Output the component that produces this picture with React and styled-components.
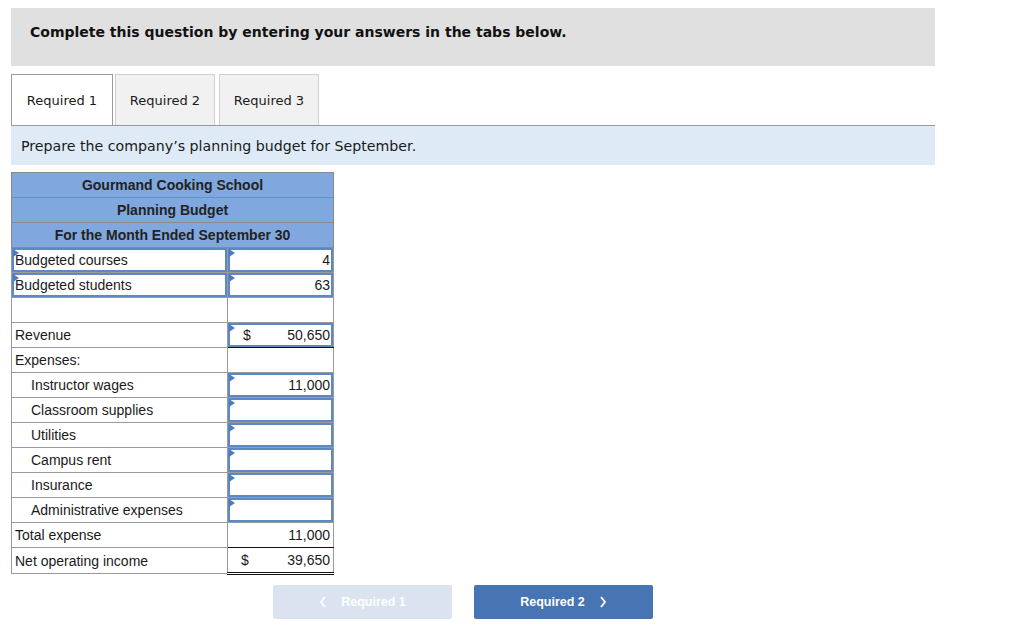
import React from "react";
import styled, { createGlobalStyle } from "styled-components";

const GlobalStyle = createGlobalStyle`
  body {
    margin: 0;
    background: #ffffff;
    font-family: "DejaVu Sans", Verdana, sans-serif;
    color: #1a1a1a;
  }
`;

const Page = styled.div`
  width: 924px;
  padding: 8px 0 0 11px;
`;

const Banner = styled.div`
  height: 58px;
  box-sizing: border-box;
  padding: 16px 0 0 19px;
  background: #e0e0e0;
  font-weight: bold;
  font-size: 14px;
  color: #111;
`;

const TabRow = styled.div`
  display: flex;
  margin-top: 8px;
  align-items: flex-end;
`;

const Tab = styled.div`
  width: ${(p) => p.$w}px;
  height: 51px;
  box-sizing: border-box;
  margin-right: ${(p) => p.$mr}px;
  display: flex;
  align-items: center;
  justify-content: center;
  font-size: 13px;
  color: #1a1a1a;
  background: ${(p) => (p.$active ? "#ffffff" : "#f1f1f1")};
  border: 1px solid ${(p) => (p.$active ? "#9a9a9a" : "#cfcfcf")};
  border-bottom: none;
`;

const Instruction = styled.div`
  height: 40px;
  box-sizing: border-box;
  border-top: 1px solid #9a9a9a;
  background: #deebf7;
  padding: 0 0 0 10px;
  display: flex;
  align-items: center;
  font-size: 14.2px;
  color: #1a1a1a;
`;

const Sheet = styled.table`
  margin-top: 7px;
  width: 322px;
  border-collapse: collapse;
  table-layout: fixed;
  font-family: "Liberation Sans", Arial, sans-serif;
  font-size: 14px;
  line-height: 16px;
  color: #1a1a1a;
`;

const HeadCell = styled.td`
  height: 24px;
  padding: 0;
  background: #80a8de;
  border: 1px solid #8a8a8a;
  text-align: center;
  font-weight: bold;
  color: #222;
`;

const Cell = styled.td`
  height: 24px;
  padding: 0 3px 0 ${(p) => (p.$indent ? "19px" : "3px")};
  border: 1px solid #9a9a9a;
  white-space: nowrap;
  text-align: ${(p) => (p.$right ? "right" : "left")};
  border-bottom: ${(p) =>
    p.$double ? "3px double #111" : p.$under ? "1px solid #111" : "1px solid #9a9a9a"};
`;

const InputCell = styled.td`
  height: 24px;
  padding: 0;
  border: 1px solid #9a9a9a;
  border-bottom: ${(p) => (p.$under ? "1px solid #111" : "1px solid #9a9a9a")};
`;

const InputBox = styled.div`
  position: relative;
  height: 24px;
  box-sizing: border-box;
  border: 2px solid #5d88c6;
  display: flex;
  align-items: center;
  white-space: nowrap;
  padding: 0 1px 0 ${(p) => (p.$left ? "1px" : "13px")};
  &::before {
    content: "";
    position: absolute;
    left: -1px;
    top: -1px;
    border-top: 4px solid transparent;
    border-bottom: 4px solid transparent;
    border-left: 6px solid #4a7cc4;
  }
`;

const Num = styled.span`
  margin-left: auto;
`;

const Money = styled.div`
  display: flex;
  justify-content: space-between;
  padding-left: 10px;
`;

const Footer = styled.div`
  display: flex;
  gap: 22px;
  margin: 10px 0 0 262px;
`;

const NavButton = styled.div`
  width: 179px;
  height: 34px;
  display: flex;
  align-items: center;
  justify-content: center;
  gap: 14px;
  border-radius: 2px;
  font-family: "Liberation Sans", Arial, sans-serif;
  font-weight: bold;
  font-size: 12.5px;
  color: #ffffff;
  background: ${(p) => (p.$disabled ? "#dae3ef" : "#4774b3")};
`;

const Chevron = ({ dir }) => (
  <svg width="8" height="12" viewBox="0 0 8 12">
    <path
      d={dir === "left" ? "M6 1 L2 6 L6 11" : "M2 1 L6 6 L2 11"}
      fill="none"
      stroke="#ffffff"
      strokeWidth="1.8"
    />
  </svg>
);

const expenses = [
  ["Instructor wages", "11,000"],
  ["Classroom supplies", ""],
  ["Utilities", ""],
  ["Campus rent", ""],
  ["Insurance", ""],
  ["Administrative expenses", ""],
];

export default function App() {
  return (
    <Page>
      <GlobalStyle />
      <Banner>Complete this question by entering your answers in the tabs below.</Banner>
      <TabRow>
        <Tab $active $w={102} $mr={2}>Required 1</Tab>
        <Tab $w={100} $mr={4}>Required 2</Tab>
        <Tab $w={100} $mr={0}>Required 3</Tab>
      </TabRow>
      <Instruction>Prepare the company’s planning budget for September.</Instruction>

      <Sheet>
        <colgroup>
          <col style={{ width: 216 }} />
          <col style={{ width: 106 }} />
        </colgroup>
        <tbody>
          <tr><HeadCell colSpan={2}>Gourmand Cooking School</HeadCell></tr>
          <tr><HeadCell colSpan={2}>Planning Budget</HeadCell></tr>
          <tr><HeadCell colSpan={2}>For the Month Ended September 30</HeadCell></tr>
          <tr>
            <InputCell><InputBox $left>Budgeted courses</InputBox></InputCell>
            <InputCell><InputBox><Num>4</Num></InputBox></InputCell>
          </tr>
          <tr>
            <InputCell><InputBox $left>Budgeted students</InputBox></InputCell>
            <InputCell><InputBox><Num>63</Num></InputBox></InputCell>
          </tr>
          <tr>
            <Cell />
            <Cell />
          </tr>
          <tr>
            <Cell>Revenue</Cell>
            <InputCell $under>
              <InputBox><span>$</span><Num>50,650</Num></InputBox>
            </InputCell>
          </tr>
          <tr>
            <Cell>Expenses:</Cell>
            <Cell />
          </tr>
          {expenses.map(([label, value]) => (
            <tr key={label}>
              <Cell $indent>{label}</Cell>
              <InputCell><InputBox><Num>{value}</Num></InputBox></InputCell>
            </tr>
          ))}
          <tr>
            <Cell>Total expense</Cell>
            <Cell $right $under>11,000</Cell>
          </tr>
          <tr>
            <Cell>Net operating income</Cell>
            <Cell $double>
              <Money><span>$</span><span>39,650</span></Money>
            </Cell>
          </tr>
        </tbody>
      </Sheet>

      <Footer>
        <NavButton $disabled><Chevron dir="left" />Required 1</NavButton>
        <NavButton>Required 2<Chevron dir="right" /></NavButton>
      </Footer>
    </Page>
  );
}
